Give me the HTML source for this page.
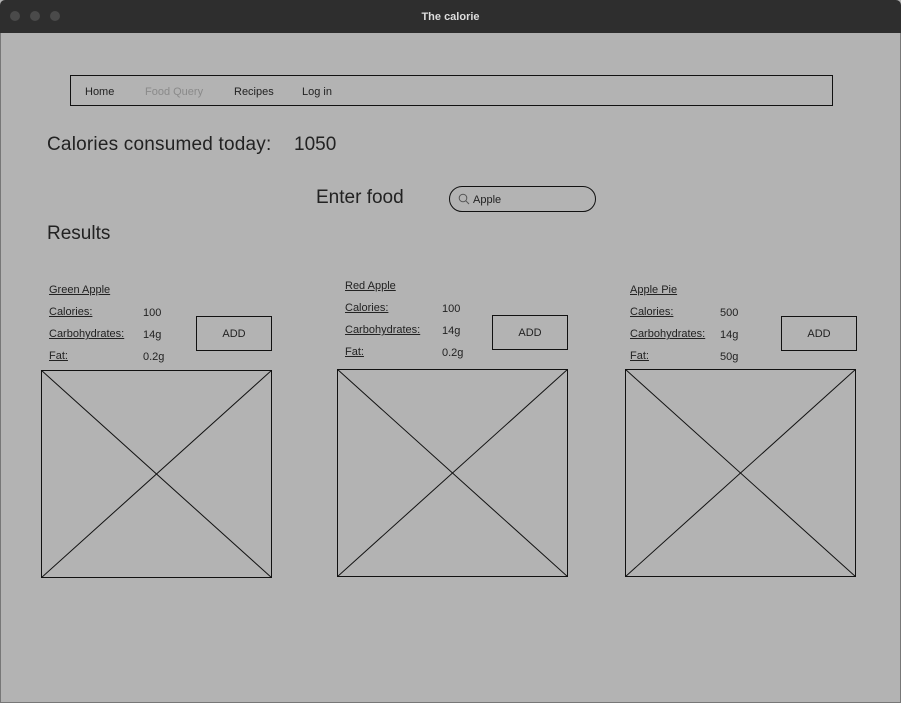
<!DOCTYPE html>
<html><head><meta charset="utf-8"><style>
body{margin:0;width:901px;height:703px;background:#b3b3b3;font-family:"Liberation Sans",sans-serif;position:relative;overflow:hidden;color:#222}
.a{position:absolute;white-space:nowrap}
.t{transform:translateY(2px)}
.s{font-size:11px}
.u{text-decoration:underline}
.box{position:absolute;border:1px solid #111;box-sizing:border-box}
.add{font-size:11px;display:flex;align-items:center;justify-content:center}
</style></head><body>
<div class="a" style="left:0;top:0;width:901px;height:33px;background:#2e2e2e;border-radius:5px 5px 0 0"></div>
<div class="a" style="left:10px;top:11px;width:10px;height:10px;border-radius:50%;background:#4a4a4a"></div>
<div class="a" style="left:30px;top:11px;width:10px;height:10px;border-radius:50%;background:#4a4a4a"></div>
<div class="a" style="left:50px;top:11px;width:10px;height:10px;border-radius:50%;background:#4a4a4a"></div>
<div class="a" style="left:0;width:901px;top:11px;text-align:center;color:#ddd;font-size:11px;font-weight:bold">The calorie</div>
<div class="box" style="left:0;top:33px;width:901px;height:670px;border-color:#777;border-top:none"></div>

<div class="box" style="left:70px;top:75px;width:763px;height:31px"></div>
<div class="a s t" style="left:85px;top:84px">Home</div>
<div class="a s t" style="left:145px;top:84px;color:#8a8a8a">Food Query</div>
<div class="a s t" style="left:234px;top:84px">Recipes</div>
<div class="a s t" style="left:302px;top:84px">Log in</div>

<div class="a t" style="left:47px;top:132px;font-size:19px;letter-spacing:0.2px">Calories consumed today:</div>
<div class="a t" style="left:294px;top:132px;font-size:19px">1050</div>
<div class="a t" style="left:316px;top:185px;font-size:19px">Enter food</div>
<div class="box" style="left:449px;top:186px;width:147px;height:26px;border-radius:13px"></div>
<svg class="a" style="left:458px;top:193px" width="12" height="12"><circle cx="5" cy="5" r="3.8" fill="none" stroke="#555" stroke-width="1"/><line x1="7.7" y1="7.7" x2="11" y2="11" stroke="#555"/></svg>
<div class="a s t" style="left:473px;top:192px">Apple</div>
<div class="a t" style="left:47px;top:221px;font-size:19px">Results</div>

<!-- card 1 -->
<div class="a s u t" style="left:49px;top:282px">Green Apple</div>
<div class="a s u t" style="left:49px;top:304px">Calories:</div><div class="a s t" style="left:143px;top:305px">100</div>
<div class="a s u t" style="left:49px;top:326px">Carbohydrates:</div><div class="a s t" style="left:143px;top:327px">14g</div>
<div class="a s u t" style="left:49px;top:348px">Fat:</div><div class="a s t" style="left:143px;top:349px">0.2g</div>
<div class="box add" style="left:196px;top:316px;width:76px;height:35px">ADD</div>
<svg class="a" style="left:41px;top:370px" width="231" height="208"><rect x="0.5" y="0.5" width="230" height="207" fill="none" stroke="#111"/><line x1="0" y1="0" x2="231" y2="208" stroke="#111"/><line x1="231" y1="0" x2="0" y2="208" stroke="#111"/></svg>

<!-- card 2 -->
<div class="a s u t" style="left:345px;top:278px">Red Apple</div>
<div class="a s u t" style="left:345px;top:300px">Calories:</div><div class="a s t" style="left:442px;top:301px">100</div>
<div class="a s u t" style="left:345px;top:322px">Carbohydrates:</div><div class="a s t" style="left:442px;top:323px">14g</div>
<div class="a s u t" style="left:345px;top:344px">Fat:</div><div class="a s t" style="left:442px;top:345px">0.2g</div>
<div class="box add" style="left:492px;top:315px;width:76px;height:35px">ADD</div>
<svg class="a" style="left:337px;top:369px" width="231" height="208"><rect x="0.5" y="0.5" width="230" height="207" fill="none" stroke="#111"/><line x1="0" y1="0" x2="231" y2="208" stroke="#111"/><line x1="231" y1="0" x2="0" y2="208" stroke="#111"/></svg>

<!-- card 3 -->
<div class="a s u t" style="left:630px;top:282px">Apple Pie</div>
<div class="a s u t" style="left:630px;top:304px">Calories:</div><div class="a s t" style="left:720px;top:305px">500</div>
<div class="a s u t" style="left:630px;top:326px">Carbohydrates:</div><div class="a s t" style="left:720px;top:327px">14g</div>
<div class="a s u t" style="left:630px;top:348px">Fat:</div><div class="a s t" style="left:720px;top:349px">50g</div>
<div class="box add" style="left:781px;top:316px;width:76px;height:35px">ADD</div>
<svg class="a" style="left:625px;top:369px" width="231" height="208"><rect x="0.5" y="0.5" width="230" height="207" fill="none" stroke="#111"/><line x1="0" y1="0" x2="231" y2="208" stroke="#111"/><line x1="231" y1="0" x2="0" y2="208" stroke="#111"/></svg>
</body></html>
